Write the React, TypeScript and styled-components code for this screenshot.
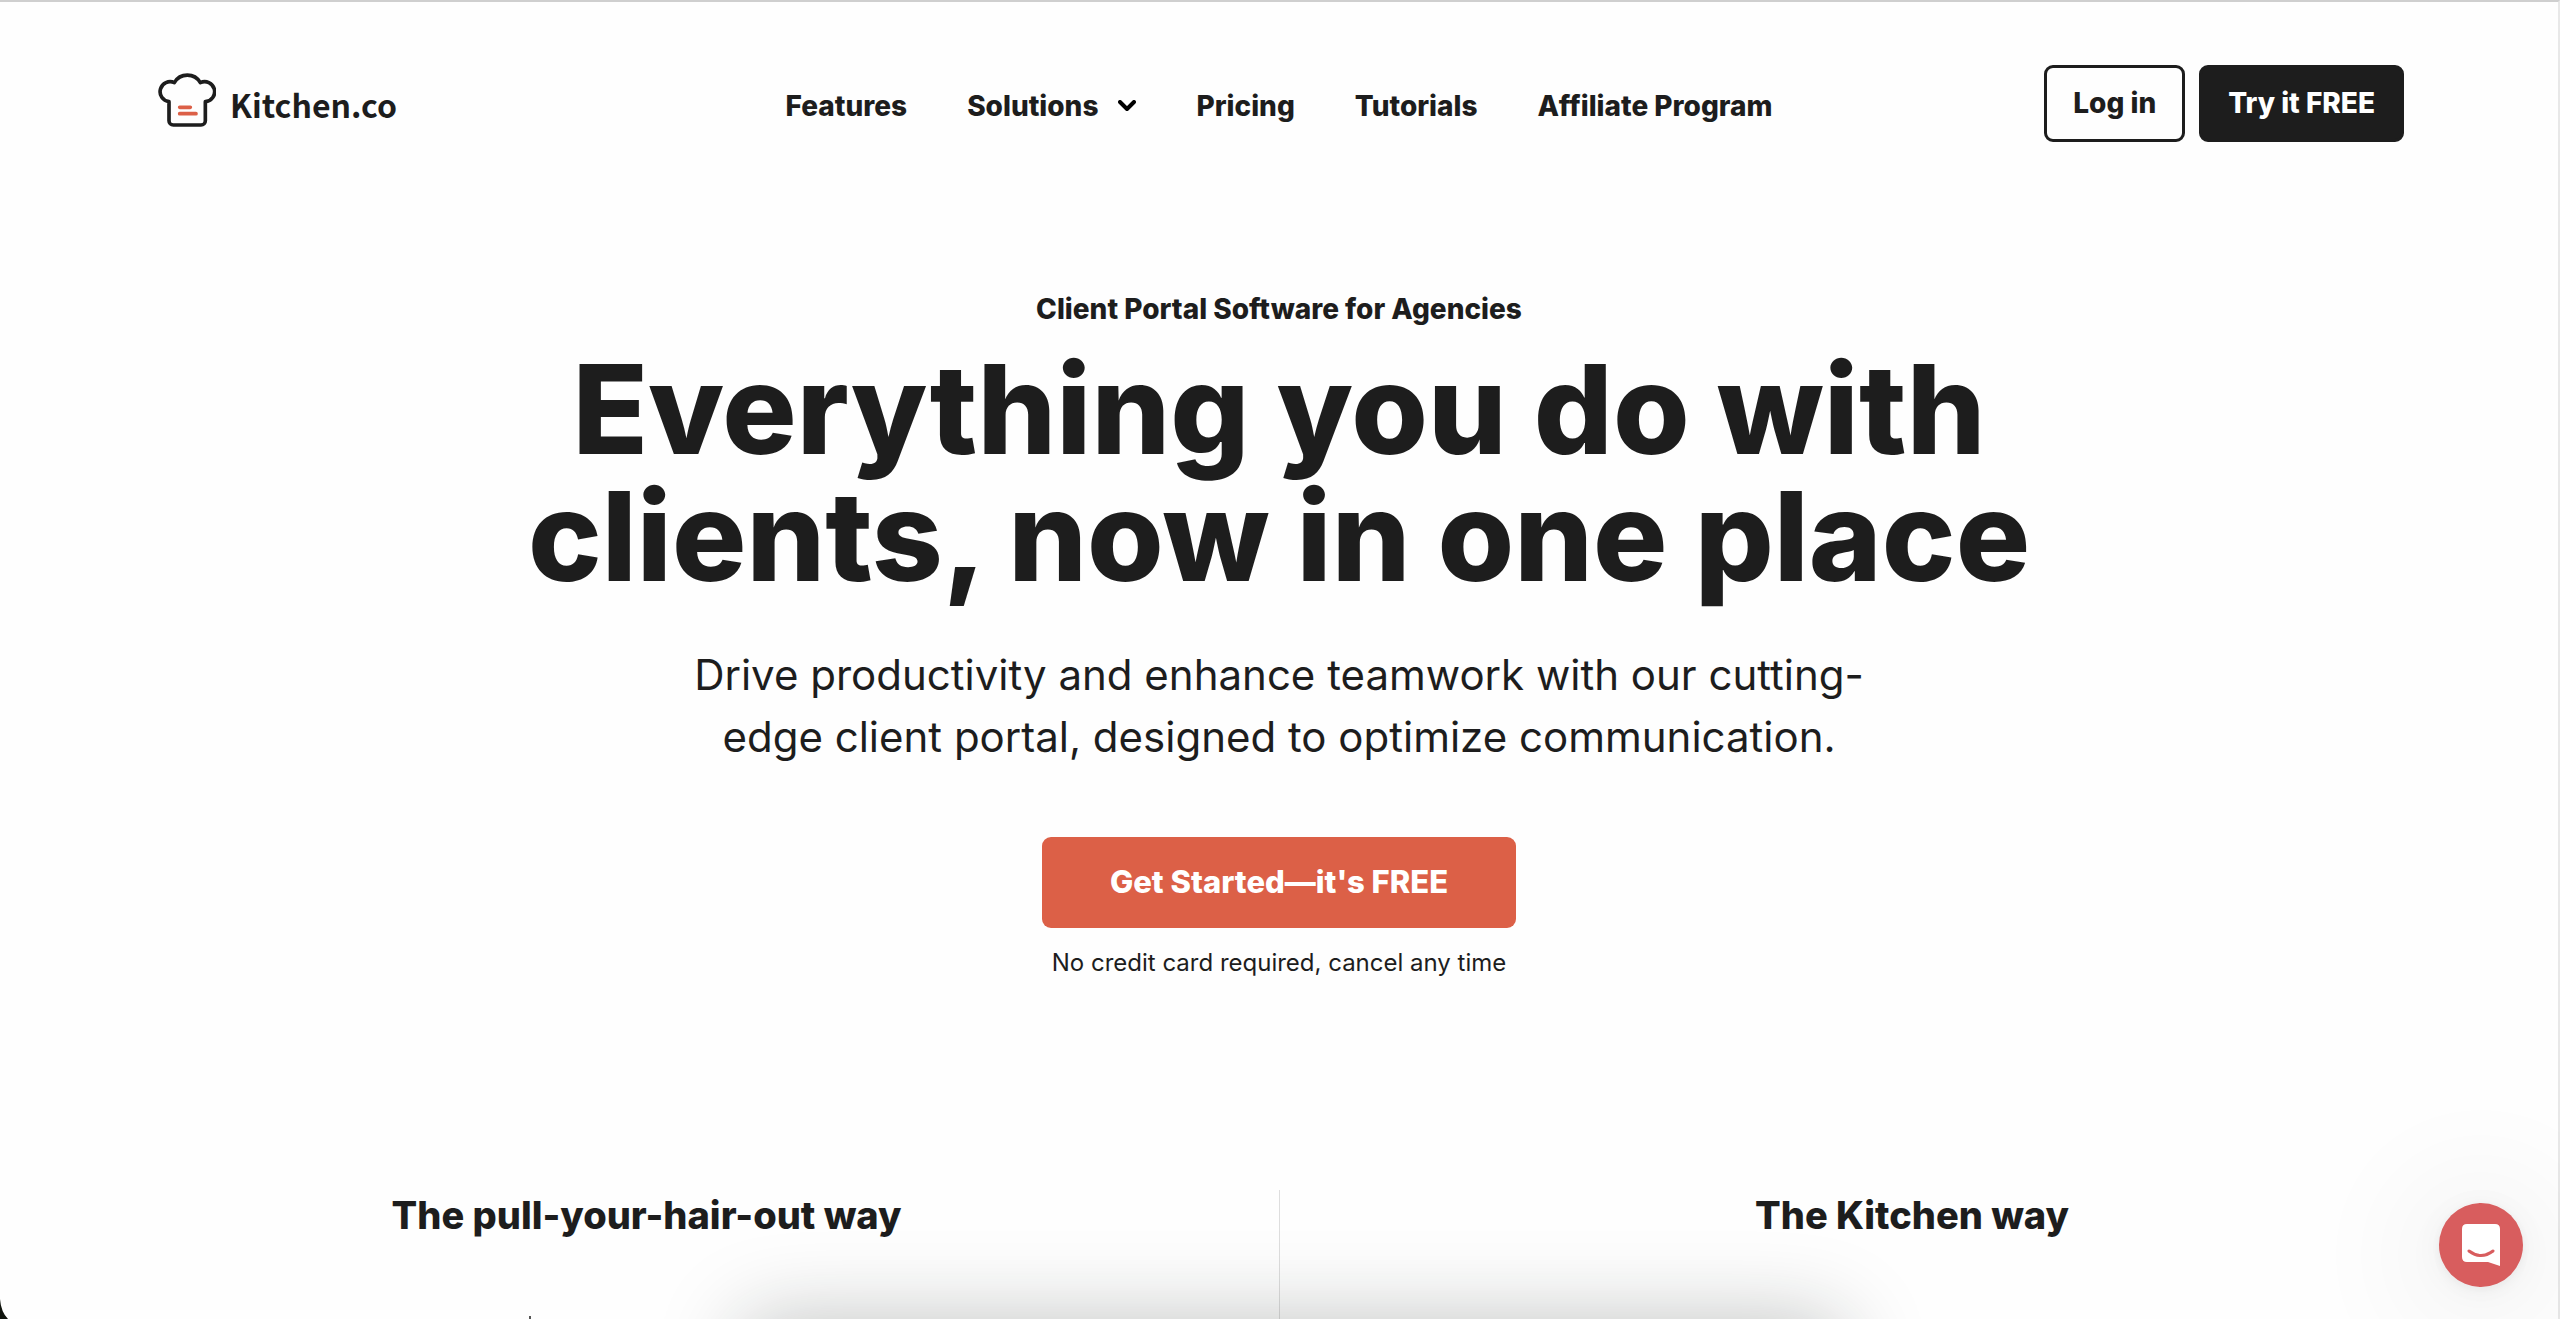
import React from "react";
import styled, { createGlobalStyle } from "styled-components";

const ink = "#1d1d1d";
const accent = "#dc6047";

const GlobalStyle = createGlobalStyle`
  *, *::before, *::after { box-sizing: border-box; }
  body {
    margin: 0;
    background: #fefefe;
    color: ${ink};
    font-family: Inter, "Liberation Sans", sans-serif;
  }
`;

const Page = styled.div`
  min-height: 100vh;
  display: flex;
  flex-direction: column;
  border-top: 2px solid #cfcfcf;
  border-right: 2px solid #e8e8e8;
`;

const Header = styled.header`
  display: grid;
  grid-template-columns: 1fr auto 1fr;
  align-items: center;
  padding: 63px 154px 0;
`;

const Brand = styled.a`
  display: flex;
  align-items: center;
  gap: 14px;
  padding-left: 4px;
  color: inherit;
  text-decoration: none;
  font-family: "Noto Sans CJK SC", "Noto Sans", sans-serif;
  font-size: 32px;
  font-weight: 700;
  line-height: 48px;
`;

const BrandMark = styled.svg`
  width: 58px;
  height: 55px;
  margin-bottom: 8px;
`;

const Nav = styled.nav`
  display: flex;
  gap: 60px;
  padding-top: 4px;
`;

const NavLink = styled.a`
  color: inherit;
  text-decoration: none;
  font-size: 28px;
  font-weight: 800;
  line-height: 34px;
  white-space: nowrap;
`;

const NavMenu = styled.button`
  display: flex;
  align-items: center;
  gap: 20px;
  padding: 0;
  border: 0;
  background: none;
  color: inherit;
  font-family: inherit;
  font-size: 28px;
  font-weight: 800;
  line-height: 34px;
`;

const Chevron = styled.svg`
  width: 18px;
  height: 12px;
`;

const Actions = styled.div`
  display: flex;
  justify-content: flex-end;
  gap: 14px;
`;

const ActionButton = styled.button<{ $filled?: boolean }>`
  height: 77px;
  padding: 0 26px 2px;
  border: 3px solid ${ink};
  border-radius: 9px;
  background: ${(p) => (p.$filled ? ink : "transparent")};
  color: ${(p) => (p.$filled ? "#fff" : ink)};
  font-family: inherit;
  font-size: 28px;
  font-weight: 800;
  line-height: 34px;
`;

const Hero = styled.section`
  display: flex;
  flex-direction: column;
  align-items: center;
  padding-top: 150px;
  text-align: center;
`;

const Eyebrow = styled.p`
  margin: 0;
  font-size: 28px;
  font-weight: 800;
  line-height: 34px;
`;

const Title = styled.h1`
  max-width: 1600px;
  margin: 20px 0 0;
  font-size: 124px;
  font-weight: 800;
  line-height: 127px;
`;

const Lead = styled.p`
  max-width: 1240px;
  margin: 44px 0 0;
  font-size: 42px;
  font-weight: 400;
  line-height: 62px;
`;

const CallToAction = styled.button`
  height: 91px;
  margin-top: 69px;
  padding: 0 68px 2px;
  border: 0;
  border-radius: 9px;
  background: ${accent};
  color: #fff;
  font-family: inherit;
  font-size: 31px;
  font-weight: 800;
  line-height: 38px;
`;

const Note = styled.p`
  margin: 18px 0 0;
  font-size: 24px;
  line-height: 34px;
`;

const Comparison = styled.section`
  flex: 1;
  display: grid;
  grid-template-columns: 1fr 1fr;
  margin-top: 210px;
`;

const Way = styled.article`
  display: flex;
  flex-direction: column;
  align-items: center;
  justify-content: space-between;
  padding-left: 14px;

  & + & {
    padding: 0 14px 0 0;
    border-left: 1px solid #dedede;
  }
`;

const WayTitle = styled.h2`
  margin: 2px 0 0;
  font-size: 38px;
  font-weight: 800;
  line-height: 46px;
`;

const DrawingTip = styled.span`
  width: 2px;
  height: 3px;
  margin-right: 234px;
  background: #555;
`;

const DockShadow = styled.div`
  position: fixed;
  top: 100%;
  left: 29%;
  right: 28%;
  height: 200px;
  border-radius: 24px;
  box-shadow: 0 0 84px rgba(20, 28, 24, 0.26);
  pointer-events: none;
`;

const WindowCorner = styled.svg`
  position: fixed;
  left: 0;
  bottom: 0;
  width: 8px;
  height: 20px;
`;

const Launcher = styled.button`
  position: fixed;
  right: 37px;
  bottom: 32px;
  display: flex;
  align-items: center;
  justify-content: center;
  width: 84px;
  height: 84px;
  padding: 0;
  border: 0;
  border-radius: 50%;
  background: #d85d5e;
  box-shadow: 0 2px 12px rgba(0, 0, 0, 0.06), 0 4px 44px rgba(0, 0, 0, 0.05),
    0 10px 110px 50px rgba(0, 0, 0, 0.035);
`;

const LauncherIcon = styled.svg`
  width: 38px;
  height: 43px;
`;

export default function App() {
  return (
    <>
      <GlobalStyle />
      <Page>
        <Header>
          <Brand href="#">
            <BrandMark viewBox="0 0 174 165" fill="none" strokeLinecap="round" strokeLinejoin="round" aria-hidden="true">
              <path
                d="M33 89A30 30 0 1 1 49 32A45 45 0 0 1 127 32A30 30 0 1 1 142 89V146A13 13 0 0 1 129 159H46A13 13 0 0 1 33 146Z"
                stroke={ink}
                strokeWidth="11"
              />
              <path d="M65 106H97M65 125H114" stroke={accent} strokeWidth="11" />
            </BrandMark>
            Kitchen.co
          </Brand>
          <Nav aria-label="Main">
            <NavLink href="#features">Features</NavLink>
            <NavMenu type="button" aria-haspopup="true">
              Solutions
              <Chevron viewBox="0 0 18 12" fill="none" aria-hidden="true">
                <path d="M2 2L9 9L16 2" stroke="#000" strokeWidth="4" strokeLinecap="round" strokeLinejoin="round" />
              </Chevron>
            </NavMenu>
            <NavLink href="#pricing">Pricing</NavLink>
            <NavLink href="#tutorials">Tutorials</NavLink>
            <NavLink href="#affiliate">Affiliate Program</NavLink>
          </Nav>
          <Actions>
            <ActionButton type="button">Log in</ActionButton>
            <ActionButton type="button" $filled>Try it FREE</ActionButton>
          </Actions>
        </Header>
        <Hero>
          <Eyebrow>Client Portal Software for Agencies</Eyebrow>
          <Title>
            Everything you do with
            <br />
            clients, now in one place
          </Title>
          <Lead>
            Drive productivity and enhance teamwork with our cutting-edge client portal, designed to optimize
            communication.
          </Lead>
          <CallToAction type="button">Get Started—it's FREE</CallToAction>
          <Note>No credit card required, cancel any time</Note>
        </Hero>
        <Comparison>
          <Way>
            <WayTitle>The pull-your-hair-out way</WayTitle>
            <DrawingTip />
          </Way>
          <Way>
            <WayTitle>The Kitchen way</WayTitle>
          </Way>
        </Comparison>
      </Page>
      <DockShadow />
      <WindowCorner viewBox="0 0 8 20" aria-hidden="true">
        <path d="M0 0Q1 13 8 20H0Z" fill="#10140d" />
      </WindowCorner>
      <Launcher type="button" aria-label="Open chat">
        <LauncherIcon viewBox="0 0 38 43" aria-hidden="true">
          <path d="M5 0H33Q38 0 38 5V42L26 38H5Q0 38 0 33V5Q0 0 5 0Z" fill="#fff" />
          <path d="M7 27Q19 36 31 27" fill="none" stroke="#d85d5e" strokeWidth="3" strokeLinecap="round" />
        </LauncherIcon>
      </Launcher>
    </>
  );
}
